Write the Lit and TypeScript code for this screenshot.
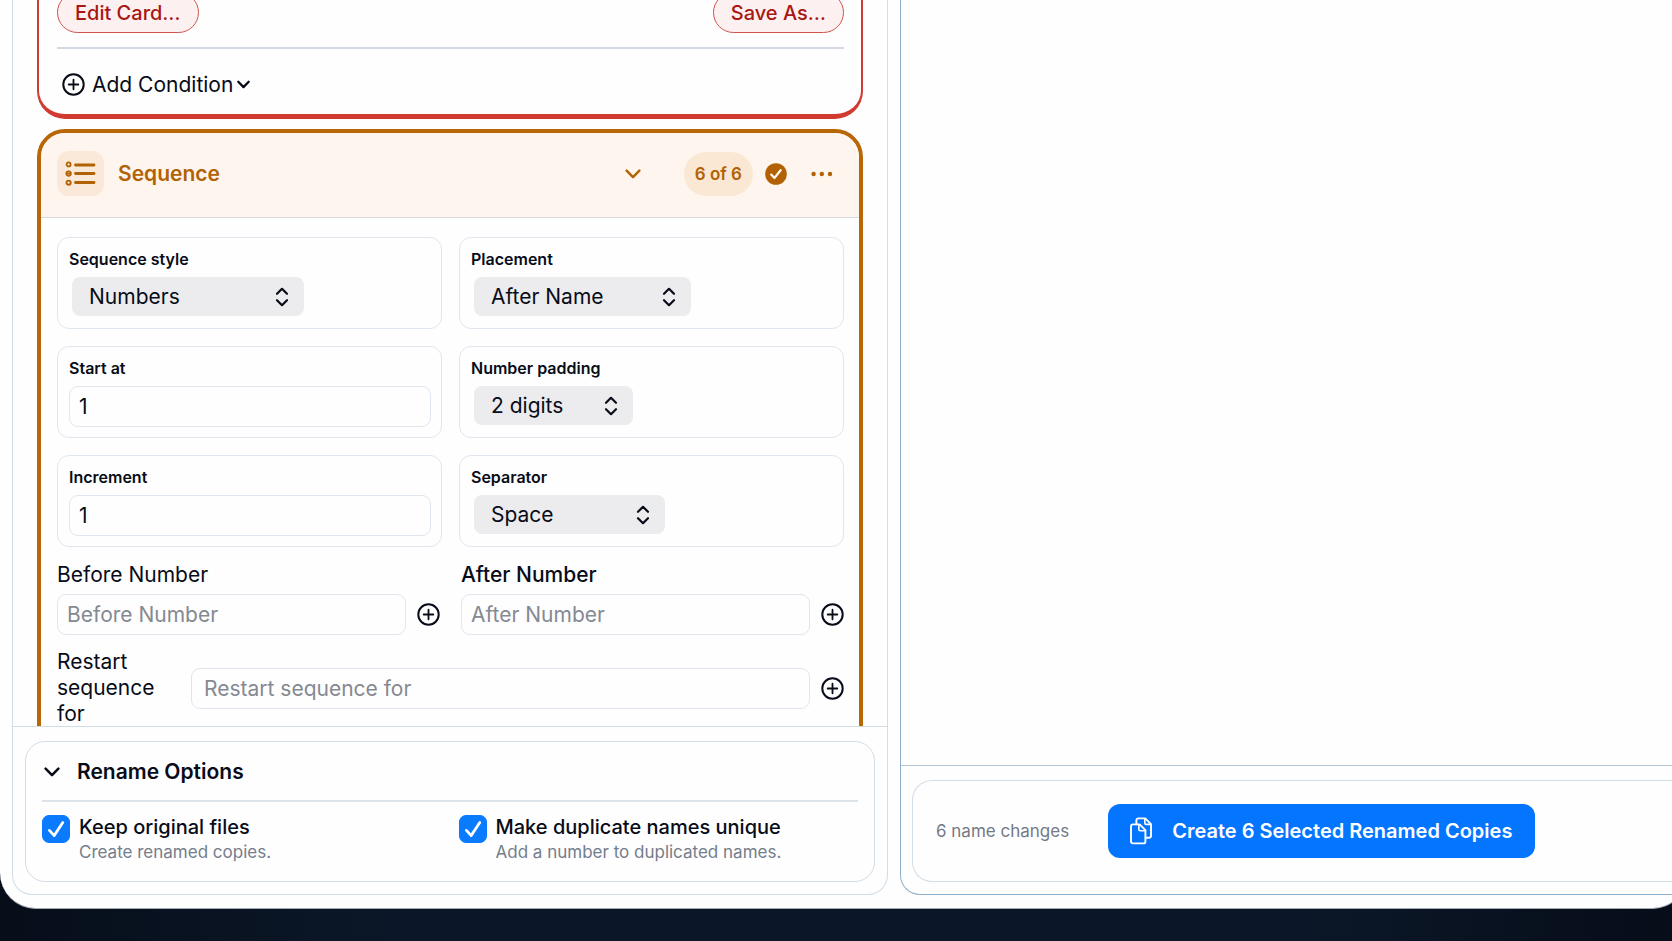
import { LitElement, html, css, svg, nothing } from "lit";
import { customElement, property, state } from "lit/decorators.js";
import { classMap } from "lit/directives/class-map.js";

const shared = css`
  *,
  *::before,
  *::after {
    box-sizing: border-box;
  }
  button,
  input,
  select {
    font: inherit;
    color: inherit;
    margin: 0;
  }
  button {
    display: inline-flex;
    align-items: center;
    padding: 0;
    border: 0;
    background: none;
    cursor: pointer;
  }
  svg {
    display: block;
    flex: none;
  }
`;

const plusCircle = html`<svg width="23" height="23" viewBox="0 0 23 23" fill="none" stroke="currentColor" stroke-width="2" stroke-linecap="round" aria-hidden="true">
  <circle cx="11.5" cy="11.5" r="10.2" />
  <path d="M11.5 6.7v9.6M6.7 11.5h9.6" stroke-width="1.8" />
</svg>`;

const chevronDown = (width: number, stroke: number) => html`<svg width=${width} height=${width} viewBox="0 0 16 16" fill="none" stroke="currentColor" stroke-width=${stroke} stroke-linecap="round" stroke-linejoin="round" aria-hidden="true">
  <path d="M1.6 4.6 8 11.2l6.4-6.6" />
</svg>`;

const listIcon = html`<svg width="31" height="27" viewBox="0 0 31 27" fill="none" stroke="currentColor" stroke-linecap="round" aria-hidden="true">
  ${[5, 13.5, 22.5].map(
    (y) => svg`<path d="M10.5 ${y}h18.5" stroke-width="2.8" />`,
  )}
  <circle cx="3.6" cy="4.4" r="2" stroke-width="1.8" />
  <circle cx="3.6" cy="13.6" r="2.2" stroke-width="1.9" />
  <path d="M2 13.6h3.2" stroke-width="1.5" />
  <circle cx="3.6" cy="22.7" r="2.1" stroke-width="1.9" />
</svg>`;

const doneIcon = html`<svg width="22" height="22" viewBox="0 0 22 22" role="img" aria-label="Complete">
  <circle cx="11" cy="11" r="10.8" fill="currentColor" />
  <path d="m6.2 11.6 3.2 3.4 6.2-7.8" fill="none" stroke="#fff8ef" stroke-width="2.2" stroke-linecap="round" stroke-linejoin="round" />
</svg>`;

const moreIcon = html`<svg width="22" height="6" viewBox="0 0 22 6" fill="currentColor" aria-hidden="true">
  <circle cx="2.6" cy="3" r="2.2" />
  <circle cx="10.8" cy="3" r="2.2" />
  <circle cx="19" cy="3" r="2.2" />
</svg>`;

const copyIcon = html`<svg width="22" height="28" viewBox="0 0 22 28" fill="none" stroke="currentColor" stroke-width="1.9" stroke-linejoin="round" stroke-linecap="round" aria-hidden="true">
  <path d="M6.4 7.2V3.4Q6.4 1.4 8.4 1.4h6.8L21 7.2v11.6q0 2-2 2h-2.6" />
  <path d="M14.8 1.8v4.2q0 1.4 1.4 1.4h4.4" stroke-width="1.6" />
  <path d="M1 9.4q0-2 2-2h6.6l5.8 5.8v11.2q0 2-2 2H3q-2 0-2-2Z" />
  <path d="M8.8 7.8v4.4q0 1.6 1.6 1.6h4.8" stroke-width="1.6" />
</svg>`;

@customElement("popup-field")
class PopupField extends LitElement {
  @property() label = "";
  @property() size = "";
  @property({ attribute: false }) options: string[] = [];

  static styles = [
    shared,
    css`
      :host {
        display: block;
      }
      .label {
        display: block;
        font-size: 16px;
        font-weight: 600;
        line-height: 20px;
        margin-bottom: 8px;
      }
      .popup {
        display: grid;
        align-items: center;
        margin-left: 3px;
        max-width: 232px;
      }
      .popup.medium {
        max-width: 217px;
      }
      .popup.short {
        max-width: 159px;
      }
      .popup.compact {
        max-width: 191px;
      }
      select,
      .arrows {
        grid-area: 1 / 1;
      }
      select {
        appearance: none;
        width: 100%;
        height: 39px;
        padding: 0 40px 0 17px;
        border: 0;
        border-radius: 8px;
        background: #ececee;
        font-size: 21px;
      }
      .arrows {
        justify-self: end;
        margin-right: 15px;
        pointer-events: none;
      }
    `,
  ];

  render() {
    return html`
      <label class="label" for="control">${this.label}</label>
      <div class=${classMap({ popup: true, [this.size]: !!this.size })}>
        <select id="control">
          ${this.options.map((option) => html`<option>${option}</option>`)}
        </select>
        <svg class="arrows" width="14" height="20" viewBox="0 0 14 20" fill="none" stroke="currentColor" stroke-width="2.2" stroke-linecap="round" stroke-linejoin="round" aria-hidden="true">
          <path d="M2 6.8 7 1.8l5 5M2 13.2l5 5 5-5" />
        </svg>
      </div>
    `;
  }
}

@customElement("number-field")
class NumberField extends LitElement {
  @property() label = "";
  @property() value = "";

  static styles = [
    shared,
    css`
      :host {
        display: block;
      }
      .label {
        display: block;
        font-size: 16px;
        font-weight: 600;
        line-height: 20px;
        margin-bottom: 8px;
      }
      input {
        display: block;
        width: 100%;
        height: 41px;
        padding: 0 9px;
        border: 1px solid #e0e6ee;
        border-radius: 9px;
        background: #fefefe;
        font-size: 21px;
      }
    `,
  ];

  render() {
    return html`
      <label class="label" for="control">${this.label}</label>
      <input id="control" type="text" inputmode="numeric" .value=${this.value} />
    `;
  }
}

@customElement("token-field")
class TokenField extends LitElement {
  @property() label = "";
  @property({ type: Boolean, reflect: true }) inline = false;
  @property({ type: Boolean }) strong = false;

  static styles = [
    shared,
    css`
      :host {
        display: flex;
        flex-direction: column;
        gap: 6px;
        font-size: 21px;
        line-height: 26px;
      }
      :host([inline]) {
        flex-direction: row;
        align-items: center;
        gap: 22px;
      }
      :host([inline]) label {
        flex: 0 0 112px;
      }
      .strong {
        font-weight: 500;
      }
      .entry {
        display: flex;
        flex: 1;
        align-items: center;
        gap: 11px;
      }
      input {
        flex: 1;
        min-width: 0;
        height: 41px;
        padding: 0 9px;
        border: 1px solid #e0e6ee;
        border-radius: 9px;
        background: #fefefe;
      }
      :host([inline]) input {
        padding: 0 12px;
      }
      input::placeholder {
        color: #858992;
        opacity: 1;
      }
    `,
  ];

  render() {
    return html`
      <label class=${classMap({ strong: this.strong })} for="control">${this.label}</label>
      <div class="entry">
        <input id="control" type="text" placeholder=${this.label} />
        <button type="button" aria-label=${`Insert token in ${this.label}`}>${plusCircle}</button>
      </div>
    `;
  }
}

@customElement("option-check")
class OptionCheck extends LitElement {
  @property() label = "";
  @property() hint = "";

  static styles = [
    shared,
    css`
      :host {
        display: flex;
        align-items: flex-start;
        gap: 9px;
      }
      .box {
        display: grid;
        flex: none;
      }
      input,
      .tick {
        grid-area: 1 / 1;
      }
      input {
        appearance: none;
        width: 28px;
        height: 28px;
        border: 1px solid #b9c2cd;
        border-radius: 7px;
        background: #ffffff;
      }
      input:checked {
        border-color: #0a7aff;
        background: #0a7aff;
      }
      .tick {
        pointer-events: none;
      }
      label,
      .hint {
        display: block;
      }
      label {
        font-size: 20px;
        font-weight: 500;
        line-height: 24px;
      }
      .hint {
        margin-top: 2px;
        font-size: 17px;
        line-height: 22px;
        color: #747d8c;
      }
    `,
  ];

  render() {
    return html`
      <div class="box">
        <input id="control" type="checkbox" checked aria-describedby="hint" />
        <svg class="tick" width="28" height="28" viewBox="0 0 28 28" fill="none" stroke="#ffffff" stroke-width="2.8" stroke-linecap="round" stroke-linejoin="round" aria-hidden="true">
          <path d="m7.4 15.4 4.8 5.2 8.6-13" />
        </svg>
      </div>
      <div>
        <label for="control">${this.label}</label>
        <span class="hint" id="hint">${this.hint}</span>
      </div>
    `;
  }
}

@customElement("app-root")
class AppRoot extends LitElement {
  @state() private optionsOpen = true;

  static styles = [
    shared,
    css`
      :host {
        display: flex;
        box-sizing: border-box;
        height: 100vh;
        padding-bottom: 32px;
        overflow: hidden;
        background: linear-gradient(90deg, #070e1a, #0b1728 24%, #0b1728 78%, #070d19);
        color: #080c18;
        font-family: Inter, "Liberation Sans", sans-serif;
        font-size: 21px;
        line-height: 26px;
      }
      .window {
        display: grid;
        flex: 1 0 auto;
        grid-template-columns: minmax(0, 219fr) minmax(0, 194fr);
        grid-template-rows: minmax(0, 1fr);
        gap: 12px;
        width: calc(100% + 16px);
        min-height: 0;
        padding: 0 12px 13px;
        border-bottom: 1px solid #a3adb8;
        border-radius: 0 0 36px 36px;
        background: #fefefe;
      }
      .panel {
        display: flex;
        flex-direction: column;
        min-height: 0;
        border: 1px solid #d0dde7;
        border-top: 0;
        border-radius: 0 0 20px 20px;
        background: #fefefe;
      }
      .panel.preview {
        border-color: #8db0cc;
        border-right: 0;
        border-bottom-right-radius: 0;
      }
      .scroller {
        display: flex;
        flex: 1;
        flex-direction: column;
        gap: 10px;
        min-height: 0;
        padding: 0 24px;
        overflow: hidden;
      }
      .card {
        flex: none;
      }
      .condition {
        padding: 0 17px 0 18px;
        border: solid #d13a30;
        border-width: 0 2px 5px;
        border-radius: 0 0 28px 28px;
      }
      .actions {
        display: flex;
        justify-content: space-between;
        margin-top: -8px;
        padding-bottom: 14px;
        border-bottom: 2px solid #d3d9e3;
      }
      .pill {
        height: 41px;
        padding: 0 17px;
        border: 1px solid #cf544f;
        border-radius: 21px;
        background: #fdf0f0;
        color: #a81713;
        font-size: 20px;
        font-weight: 500;
      }
      .add {
        gap: 7px;
        height: 65px;
        padding: 6px 5px 0;
      }
      .add .label {
        margin-right: -3px;
      }
      .sequence {
        border: 4px solid #b96606;
        border-radius: 28px;
      }
      .head {
        display: flex;
        align-items: center;
        height: 85px;
        padding: 0 26px 3px 16px;
        border-bottom: 1px solid #d8d9dc;
        border-radius: 24px 24px 0 0;
        background: #fef5ee;
        color: #b26204;
      }
      .tile {
        display: grid;
        place-items: center;
        width: 47px;
        height: 45px;
        border-radius: 12px;
        background: #fae9d8;
      }
      h2,
      h3 {
        margin: 0;
        font-size: 21px;
        font-weight: 600;
      }
      .head h2 {
        flex: 1;
        margin-left: 14px;
      }
      .count {
        margin: 0 12px 0 43px;
        padding: 0 11px;
        border-radius: 22px;
        background: #fae8d4;
        font-size: 17px;
        font-weight: 600;
        line-height: 44px;
      }
      .more {
        margin-left: 24px;
      }
      .body {
        padding: 19px 15px 48px 16px;
      }
      .settings {
        display: grid;
        grid-template-columns: repeat(2, minmax(0, 1fr));
        gap: 17px;
      }
      .setting {
        min-height: 92px;
        padding: 11px 10px 10px 11px;
        border: 1px solid #e0e6ee;
        border-radius: 12px;
      }
      .affixes {
        display: grid;
        grid-template-columns: repeat(2, minmax(0, 1fr));
        gap: 21px;
        margin: 15px 0 14px;
      }
      .foot {
        padding: 14px 12px 12px;
        border-top: 1px solid #d0dde7;
      }
      .box {
        border: 1px solid #d3dde6;
        border-radius: 20px;
      }
      .options {
        min-height: 141px;
        padding: 0 16px;
      }
      .toggle {
        gap: 17px;
        width: 100%;
        height: 60px;
        padding: 2px 2px 0;
        border-bottom: 2px solid #dde3ea;
      }
      .checks {
        display: grid;
        grid-template-columns: repeat(2, minmax(0, 1fr));
        gap: 17px;
        padding-top: 13px;
      }
      .results {
        flex: 1;
      }
      .preview .foot {
        padding: 14px 0 12px 11px;
        border-color: #b4c6d3;
      }
      .commit {
        display: flex;
        align-items: center;
        gap: 39px;
        min-height: 102px;
        padding: 0 23px;
        border-right: 0;
        border-radius: 20px 0 0 20px;
      }
      .changes {
        color: #747a86;
        font-size: 17px;
      }
      .primary {
        gap: 20px;
        height: 54px;
        padding: 0 23px 0 22px;
        border-radius: 12px;
        background: #0475ff;
        color: #ffffff;
        font-size: 20px;
        font-weight: 600;
        white-space: nowrap;
      }
    `,
  ];

  render() {
    return html`
      <main class="window">
        <section class="panel">
          <div class="scroller">
            <article class="card condition">
              <div class="actions">
                <button class="pill" type="button">Edit Card…</button>
                <button class="pill" type="button">Save As…</button>
              </div>
              <button class="add" type="button">
                ${plusCircle}<span class="label">Add Condition</span>${chevronDown(13, 2.8)}
              </button>
            </article>
            <article class="card sequence">
              <header class="head">
                <span class="tile">${listIcon}</span>
                <h2>Sequence</h2>
                <button type="button" aria-label="Collapse Sequence">${chevronDown(16, 2.4)}</button>
                <span class="count">6 of 6</span>
                ${doneIcon}
                <button class="more" type="button" aria-label="More actions">${moreIcon}</button>
              </header>
              <div class="body">
                <div class="settings">
                  <popup-field class="setting" label="Sequence style" .options=${["Numbers", "Letters"]}></popup-field>
                  <popup-field class="setting" label="Placement" size="medium" .options=${["After Name", "Before Name"]}></popup-field>
                  <number-field class="setting" label="Start at" value="1"></number-field>
                  <popup-field class="setting" label="Number padding" size="short" .options=${["2 digits", "3 digits"]}></popup-field>
                  <number-field class="setting" label="Increment" value="1"></number-field>
                  <popup-field class="setting" label="Separator" size="compact" .options=${["Space", "Dash"]}></popup-field>
                </div>
                <div class="affixes">
                  <token-field label="Before Number"></token-field>
                  <token-field label="After Number" strong></token-field>
                </div>
                <token-field label="Restart sequence for" inline></token-field>
              </div>
            </article>
          </div>
          <footer class="foot">
            <div class="box options">
              <h3>
                <button
                  class="toggle"
                  type="button"
                  aria-expanded=${this.optionsOpen ? "true" : "false"}
                  @click=${() => (this.optionsOpen = !this.optionsOpen)}
                >
                  ${chevronDown(16, 2.5)}Rename Options
                </button>
              </h3>
              ${this.optionsOpen
                ? html`<div class="checks">
                    <option-check label="Keep original files" hint="Create renamed copies."></option-check>
                    <option-check label="Make duplicate names unique" hint="Add a number to duplicated names."></option-check>
                  </div>`
                : nothing}
            </div>
          </footer>
        </section>
        <section class="panel preview">
          <div class="results"></div>
          <footer class="foot">
            <div class="box commit">
              <span class="changes">6 name changes</span>
              <button class="primary" type="button">${copyIcon}Create 6 Selected Renamed Copies</button>
            </div>
          </footer>
        </section>
      </main>
    `;
  }
}
